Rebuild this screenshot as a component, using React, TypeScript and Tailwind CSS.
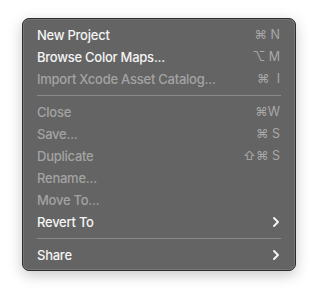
import React from "react";

type Item =
  | { type: "sep" }
  | { type: "item"; label: string; shortcut?: string; disabled?: boolean; sub?: boolean };

const items: Item[] = [
  { type: "item", label: "New Project", shortcut: "⌘ N" },
  { type: "item", label: "Browse Color Maps...", shortcut: "⌥ M" },
  { type: "item", label: "Import Xcode Asset Catalog...", shortcut: "⌘  I", disabled: true },
  { type: "sep" },
  { type: "item", label: "Close", shortcut: "⌘W", disabled: true },
  { type: "item", label: "Save...", shortcut: "⌘ S", disabled: true },
  { type: "item", label: "Duplicate", shortcut: "⇧⌘ S", disabled: true },
  { type: "item", label: "Rename...", disabled: true },
  { type: "item", label: "Move To...", disabled: true },
  { type: "item", label: "Revert To", sub: true },
  { type: "sep" },
  { type: "item", label: "Share", sub: true },
];

function Chevron() {
  return (
    <svg width="8" height="12" viewBox="0 0 8 12" className="block">
      <path d="M2 2 L6 6 L2 10" fill="none" stroke="#f2f2f2" strokeWidth="2" strokeLinecap="round" strokeLinejoin="round" />
    </svg>
  );
}

export default function App() {
  return (
    <div
      className="w-[318px] h-[298px] bg-white pt-[18px] pl-[22px]"
      style={{ fontFamily: "Inter, 'Noto Sans', sans-serif" }}
    >
      <div className="w-[274px] h-[253px] rounded-[7px] bg-[#646464] border border-[#2e2e2e] shadow-[0_4px_14px_rgba(0,0,0,0.22),inset_0_0_0_1px_rgba(255,255,255,0.12)] pt-[5px] pb-[4px] flex flex-col">
        {items.map((it, i) =>
          it.type === "sep" ? (
            <div key={i} className="h-[11px] flex items-center px-[14px]">
              <div className="h-px w-full bg-[#8a8a8a]" />
            </div>
          ) : (
            <div key={i} className="h-[22px] flex items-center justify-between pl-[14px] pr-[15px]">
              <span
                className={`text-[13px] font-medium leading-none tracking-[-0.25px] ${
                  it.disabled ? "text-[#a3a3a3]" : "text-[#f4f4f4]"
                }`}
              >
                {it.label}
              </span>
              {it.shortcut && (
                <span className="text-[12.5px] text-[#a8a8a8] leading-none whitespace-pre">{it.shortcut}</span>
              )}
              {it.sub && <Chevron />}
            </div>
          )
        )}
      </div>
    </div>
  );
}
